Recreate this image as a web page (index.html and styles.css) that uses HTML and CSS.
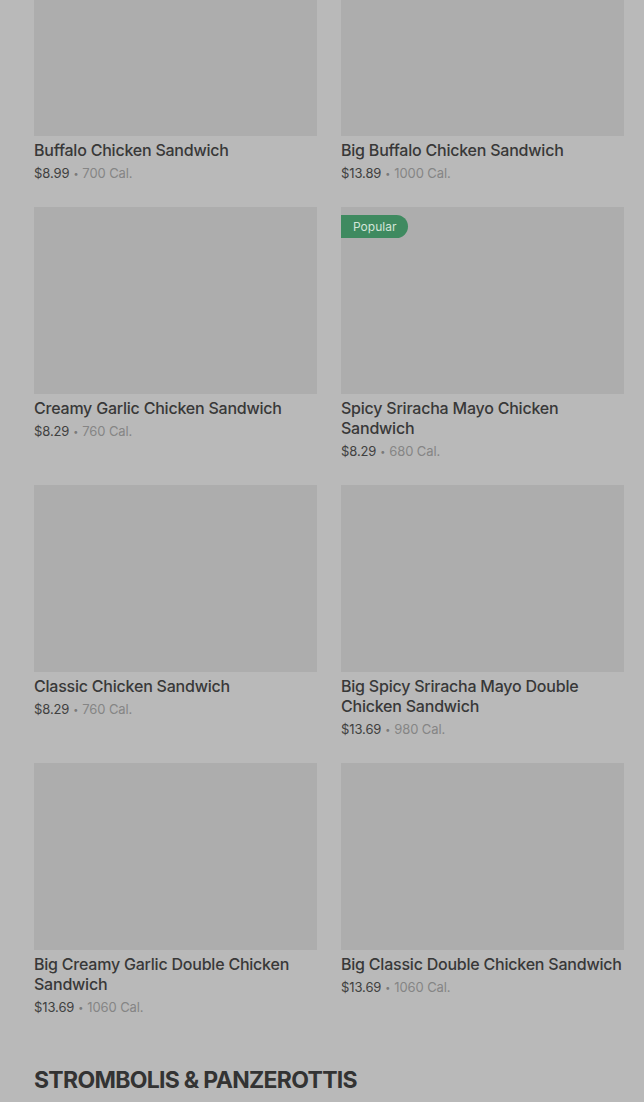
FILE: index.html
```html
<!DOCTYPE html>
<html>
<head>
<meta charset="utf-8">
<link rel="stylesheet" href="styles.css">
</head>
<body>
<main class="page">
  <section class="grid">
    <article class="card">
      <div class="thumb"></div>
      <h3 class="title">Buffalo Chicken Sandwich</h3>
      <p class="meta"><span class="price">$8.99</span><span class="dot">•</span><span class="cal">700 Cal.</span></p>
    </article>
    <article class="card">
      <div class="thumb"></div>
      <h3 class="title">Big Buffalo Chicken Sandwich</h3>
      <p class="meta"><span class="price">$13.89</span><span class="dot">•</span><span class="cal">1000 Cal.</span></p>
    </article>
    <article class="card">
      <div class="thumb"></div>
      <h3 class="title">Creamy Garlic Chicken Sandwich</h3>
      <p class="meta"><span class="price">$8.29</span><span class="dot">•</span><span class="cal">760 Cal.</span></p>
    </article>
    <article class="card">
      <div class="thumb"><span class="badge">Popular</span></div>
      <h3 class="title">Spicy Sriracha Mayo Chicken Sandwich</h3>
      <p class="meta"><span class="price">$8.29</span><span class="dot">•</span><span class="cal">680 Cal.</span></p>
    </article>
    <article class="card">
      <div class="thumb"></div>
      <h3 class="title">Classic Chicken Sandwich</h3>
      <p class="meta"><span class="price">$8.29</span><span class="dot">•</span><span class="cal">760 Cal.</span></p>
    </article>
    <article class="card">
      <div class="thumb"></div>
      <h3 class="title">Big Spicy Sriracha Mayo Double Chicken Sandwich</h3>
      <p class="meta"><span class="price">$13.69</span><span class="dot">•</span><span class="cal">980 Cal.</span></p>
    </article>
    <article class="card">
      <div class="thumb"></div>
      <h3 class="title">Big Creamy Garlic Double Chicken Sandwich</h3>
      <p class="meta"><span class="price">$13.69</span><span class="dot">•</span><span class="cal">1060 Cal.</span></p>
    </article>
    <article class="card">
      <div class="thumb"></div>
      <h3 class="title">Big Classic Double Chicken Sandwich</h3>
      <p class="meta"><span class="price">$13.69</span><span class="dot">•</span><span class="cal">1060 Cal.</span></p>
    </article>
  </section>
  <h2 class="section-title">STROMBOLIS &amp; PANZEROTTIS</h2>
</main>
</body>
</html>
```
FILE: styles.css
```css
html, body {
  margin: 0;
  padding: 0;
  background: #b9b9b9;
  font-family: Inter, "Noto Sans", "Liberation Sans", sans-serif;
  color: #393939;
  overflow: hidden;
}

.page {
  padding: 0 20px 0 34px;
}

.grid {
  margin-top: -51px;
  display: grid;
  grid-template-columns: 283px 283px;
  column-gap: 24px;
  row-gap: 24px;
  align-items: start;
}

.card {
  display: flex;
  flex-direction: column;
}

.thumb {
  position: relative;
  height: 187px;
  background: #adadad;
}

.badge {
  position: absolute;
  left: 0;
  top: 8px;
  height: 23px;
  line-height: 23px;
  padding: 0 12px 0 12px;
  border-radius: 0 12px 12px 0;
  background: #3f8a60;
  color: #d3e5d9;
  font-size: 12px;
  font-weight: 400;
}

.title {
  margin: 4px 0 0;
  font-size: 16px;
  line-height: 20px;
  font-weight: 500;
  color: #383838;
  letter-spacing: -0.22px;
}

.meta {
  margin: 3px 0 0;
  height: 20px;
  font-size: 13px;
  line-height: 20px;
  color: #858585;
  letter-spacing: -0.1px;
}

.price {
  color: #404040;
}

.dot {
  display: inline-block;
  margin: 0 4px;
  font-size: 9px;
  line-height: 1;
  vertical-align: 1px;
  color: #7a7a7a;
}

.cal {
  color: #858585;
}

.section-title {
  margin: 49px 0 0;
  font-size: 23px;
  line-height: 28px;
  font-weight: 700;
  color: #333333;
  letter-spacing: -0.7px;
}
```
